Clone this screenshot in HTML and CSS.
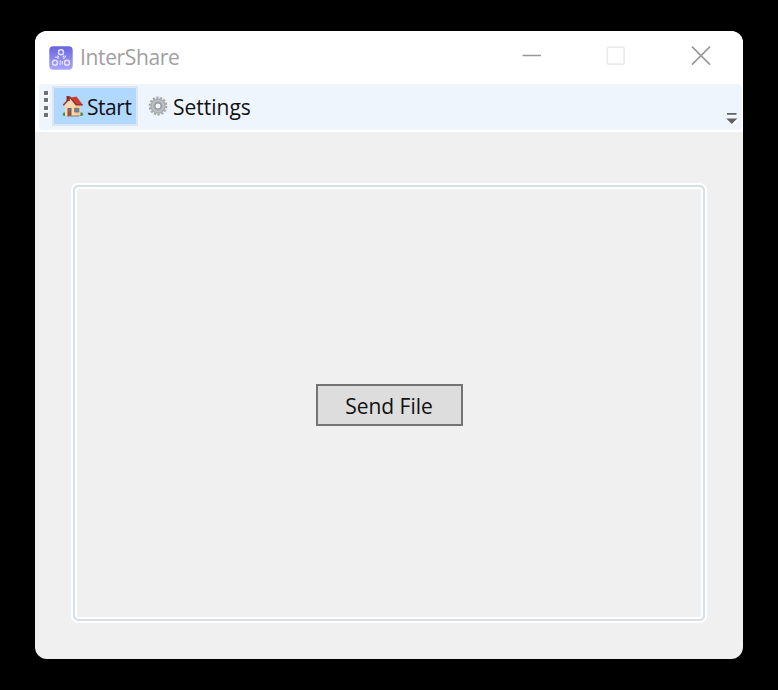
FILE: index.html
```
<!DOCTYPE html>
<html lang="en">
<head>
<meta charset="utf-8">
<title>InterShare</title>
<link rel="stylesheet" href="styles.css">
</head>
<body>
<div class="window">
  <header class="titlebar">
    <svg class="app-icon" viewBox="0 0 24 24">
      <defs><linearGradient id="tile" x1="0" y1="0" x2="0" y2="1"><stop offset="0" stop-color="#6764df"/><stop offset="1" stop-color="#aaa5fa"/></linearGradient></defs>
      <rect x=".3" y=".3" width="23.4" height="23.4" rx="4" fill="url(#tile)"/>
      <g fill="none" stroke="#e6e2ff" stroke-width="1.4">
        <circle cx="12" cy="6.3" r="2.5"/><circle cx="6" cy="16.7" r="2.5"/><circle cx="18" cy="16.7" r="2.5"/>
        <path stroke-width="1.1" d="M6 11.200q2-.8 3.400 1.600M8 9.800q1.500 .3 2 1.800M14 12.600q2.200-.3 2.800-3M13.700 10.800q1 0 1.300-1.500M11.200 14.300v4.700M13.300 15v3.500"/>
      </g>
    </svg>
    <span class="title">InterShare</span>
    <div class="controls">
      <svg viewBox="0 0 20 20"><path d="M1.500 9.500h18.500" stroke="#999" stroke-width="1.700"/></svg>
      <svg viewBox="0 0 20 20"><rect x="1.300" y="1.300" width="16.800" height="16.800" rx="1" fill="none" stroke="#eaeaea" stroke-width="1.600"/></svg>
      <svg viewBox="0 0 20 20"><path d="M1 .6l18 18M19 .6L1 18.600" stroke="#999" stroke-width="1.600"/></svg>
    </div>
  </header>
  <div class="toolstrip">
  <nav class="toolbar">
    <div class="grip"><i></i><i></i><i></i><i></i></div>
    <button class="tool active">
      <svg class="house" viewBox="0 0 22 22">
        <ellipse cx="3.200" cy="19.200" rx="2.500" ry="1.900" fill="#4e8b52"/><ellipse cx="18.800" cy="19.200" rx="2.300" ry="1.900" fill="#4e8b52"/>
        <path d="M3 10l6-7 9.500 7v10.500H3z" fill="#edcda6"/>
        <path d="M3 10l5.500-6.500L13 10v11H3z" fill="#f3d8b2"/>
        <path d="M4.500 1h3.200v5H4.500z" fill="#8e2e29"/>
        <path d="M8 2.800L14.500 1.500l6 8h-6.500z" fill="#c93d34"/>
        <path d="M1.300 10.200L8.300 2.500l5.800 7.200h6.600" fill="none" stroke="#9d3029" stroke-width="1.400"/>
        <path d="M5.500 13h4V21h-4z" fill="#92533b"/><path d="M6.500 14H8.500v2.500h-2z" fill="#65778a"/>
        <path d="M12.500 13.300h4.400v3.800h-4.400z" fill="#5b87a8" stroke="#a06d4d" stroke-width=".8"/>
        <path d="M5 21h12" stroke="#927663"/>
      </svg>
      <span>Start</span>
    </button>
    <button class="tool settings">
      <svg class="gear" viewBox="0 0 20 20">
        <circle cx="10" cy="10" r="8.300" fill="none" stroke="#a4a8aa" stroke-width="2.200" stroke-dasharray="2.200 1.524"/>
        <circle cx="10" cy="10" r="5.300" fill="none" stroke="#abafb1" stroke-width="5"/>
        <circle cx="10" cy="10" r="5.500" fill="none" stroke="#bcc0c2" stroke-width="1.600"/>
        <circle cx="10" cy="10" r="3.200" fill="none" stroke="#8d9295" stroke-width="1"/>
      </svg>
      <span>Settings</span>
    </button>
    <svg class="overflow" viewBox="0 0 12 14"><path d="M2 3h9.500M3 8h9l-4.500 5z" fill="#fff" stroke="#fff"/><path d="M1 1h9.500v1.800H1zM.3 6.500h11L5.800 12z" fill="#606266"/></svg>
  </nav>
  </div>
  <main class="content">
    <section class="group"><div class="group-inner"><button class="send">Send File</button></div></section>
  </main>
</div>
</body>
</html>
```
FILE: styles.css
```
* { box-sizing: border-box; }
body {
  margin: 0;
  height: 690px;
  padding: 31px 35px;
  background: #000;
  font: 21px/28px "Open Sans", "Noto Sans", sans-serif;
  color: #111;
  overflow: hidden;
}
.window {
  width: 708px;
  height: 628px;
  display: flex;
  flex-direction: column;
  background: #f0f0f0;
  border-radius: 12px;
  overflow: hidden;
}
.titlebar {
  height: 53px;
  flex: none;
  display: flex;
  align-items: center;
  padding: 0 32px 0 14px;
  background: #fff;
}
.app-icon { width: 24px; height: 24px; }
.title { margin: -2px 0 0 7px; color: #a0a0a0; letter-spacing: -.35px; }
.controls { display: flex; gap: 65px; margin: -4px 0 0 auto; }
.controls svg { width: 20px; height: 20px; }
.toolstrip { height: 48px; flex: none; padding: 0 1px 2px 4px; background: #fff; }
.toolbar {
  height: 46px;
  display: flex;
  align-items: flex-start;
  padding: 2px 4px 0 5px;
  background: #eef5fd;
  border-radius: 4px;
}
.grip { display: flex; flex-direction: column; gap: 3.400px; margin-top: 5px; width: 8px; }
.grip i { width: 4px; height: 4px; background: #707276; box-shadow: 1px 1px #fff; }
button { font: inherit; color: inherit; }
.tool {
  height: 40px;
  display: flex;
  align-items: center;
  padding: 2px 4px 0 8px;
  border: 2px solid transparent;
  background: none;
}
.tool.active { width: 86px; background: #b1d8ff; border-color: #dce6f3; }
.house { width: 22px; height: 22px; flex: none; margin-top: -3px; }
.tool span { margin-left: 3px; letter-spacing: -.45px; }
.gear { width: 20px; height: 20px; margin-top: -3px; }
.settings span { margin-left: 5px; letter-spacing: 0; }
.overflow { width: 12px; height: 14px; margin: 26px 0 0 auto; }
.content { flex: 1; padding: 51px 36px 36px; display: flex; }
.group {
  flex: 1;
  display: flex;
  border: 2px solid #fff;
  border-radius: 7px;
  background: #d5e0e8;
  padding: 2px;
}
.group-inner {
  flex: 1;
  display: flex;
  align-items: center;
  justify-content: center;
  background: #f0f0f0;
  border: 2px solid #fff;
  border-radius: 4px;
  padding: 3px 0 0 1px;
}
.send {
  width: 147px;
  height: 42px;
  padding: 2px 1px 0 0;
  border: 2px solid #747474;
  background: #ddd;
  white-space: nowrap;
}
```
